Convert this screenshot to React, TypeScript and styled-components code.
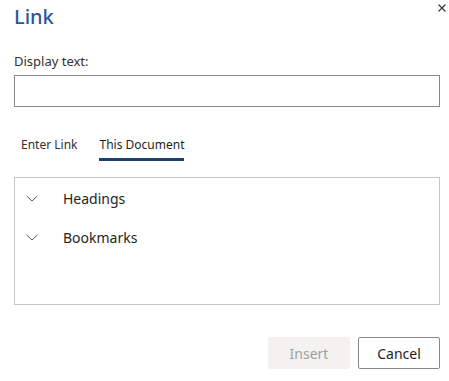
import React, { useState } from "react";
import styled, { createGlobalStyle } from "styled-components";

const Global = createGlobalStyle`
  html, body { margin: 0; padding: 0; background: #ffffff; }
  body { font-family: "Noto Sans", "Open Sans", Arial, sans-serif; }
  * { box-sizing: border-box; }
`;

const Dialog = styled.div`
  width: 449px;
  height: 381px;
  padding: 3px 9px 0 14px;
  display: flex;
  flex-direction: column;
  background: #ffffff;
  color: #323130;
`;

const Header = styled.div`
  display: flex;
  justify-content: space-between;
  align-items: flex-start;
`;

const Title = styled.h1`
  margin: 0;
  font-size: 20px;
  line-height: 28px;
  font-weight: 500;
  color: #2b579a;
`;

const CloseButton = styled.button`
  margin: -1px -8px 0 0;
  width: 12px;
  height: 12px;
  padding: 0;
  border: none;
  background: transparent;
  display: flex;
  align-items: center;
  justify-content: center;
  cursor: pointer;
`;

const Label = styled.label`
  margin-top: 21px;
  font-size: 13px;
  line-height: 18px;
  color: #323130;
`;

const TextInput = styled.input`
  margin-top: 5px;
  width: 100%;
  height: 32px;
  border: 1px solid #8a8886;
  border-radius: 0;
  padding: 0 8px;
  font: inherit;
  font-size: 14px;
  outline: none;
`;

const TabList = styled.div`
  margin-top: 30px;
  display: flex;
  gap: 22px;
  padding-left: 7px;
`;

const Tab = styled.button<{ $active?: boolean }>`
  padding: 0 0 5px;
  border: none;
  border-bottom: 3px solid ${(p) => (p.$active ? "#1f4072" : "transparent")};
  background: transparent;
  font-family: inherit;
  font-size: 12px;
  line-height: 16px;
  color: ${(p) => (p.$active ? "#201f1e" : "#323130")};
  cursor: pointer;
`;

const Panel = styled.div`
  margin-top: 16px;
  height: 128px;
  border: 1px solid #c8c6c4;
  display: flex;
  flex-direction: column;
`;

const Row = styled.div`
  height: 39px;
  display: flex;
  align-items: center;
  padding-left: 11px;
  gap: 25px;
  font-size: 14px;
  line-height: 20px;
  color: #252423;
  &:first-child { margin-top: 1px; }
`;

const Footer = styled.div`
  margin-top: 32px;
  display: flex;
  justify-content: flex-end;
  gap: 8px;
`;

const Button = styled.button<{ $disabled?: boolean }>`
  width: 82px;
  height: 32px;
  padding: 0;
  font-family: inherit;
  font-size: 14px;
  border: 1px solid ${(p) => (p.$disabled ? "#f3f2f1" : "#8a8886")};
  background: ${(p) => (p.$disabled ? "#f3f2f1" : "#ffffff")};
  color: ${(p) => (p.$disabled ? "#a19f9d" : "#201f1e")};
  border-radius: 2px;
  cursor: ${(p) => (p.$disabled ? "default" : "pointer")};
`;

const Chevron = () => (
  <svg width="12" height="7" viewBox="0 0 12 7" fill="none">
    <path d="M0.5 0.8 L6 6 L11.5 0.8" stroke="#605e5c" strokeWidth="1" />
  </svg>
);

const CloseIcon = () => (
  <svg width="8" height="8" viewBox="0 0 8 8" fill="none">
    <path d="M0.5 0.5 L7.5 7.5 M7.5 0.5 L0.5 7.5" stroke="#323130" strokeWidth="1.1" />
  </svg>
);

export default function App() {
  const [tab, setTab] = useState("doc");
  return (
    <>
      <Global />
      <Dialog>
        <Header>
          <Title>Link</Title>
          <CloseButton aria-label="Close">
            <CloseIcon />
          </CloseButton>
        </Header>
        <Label htmlFor="display-text">Display text:</Label>
        <TextInput id="display-text" />
        <TabList>
          <Tab $active={tab === "link"} onClick={() => setTab("link")}>Enter Link</Tab>
          <Tab $active={tab === "doc"} onClick={() => setTab("doc")}>This Document</Tab>
        </TabList>
        <Panel>
          <Row>
            <Chevron />
            <span>Headings</span>
          </Row>
          <Row>
            <Chevron />
            <span>Bookmarks</span>
          </Row>
        </Panel>
        <Footer>
          <Button $disabled>Insert</Button>
          <Button>Cancel</Button>
        </Footer>
      </Dialog>
    </>
  );
}
